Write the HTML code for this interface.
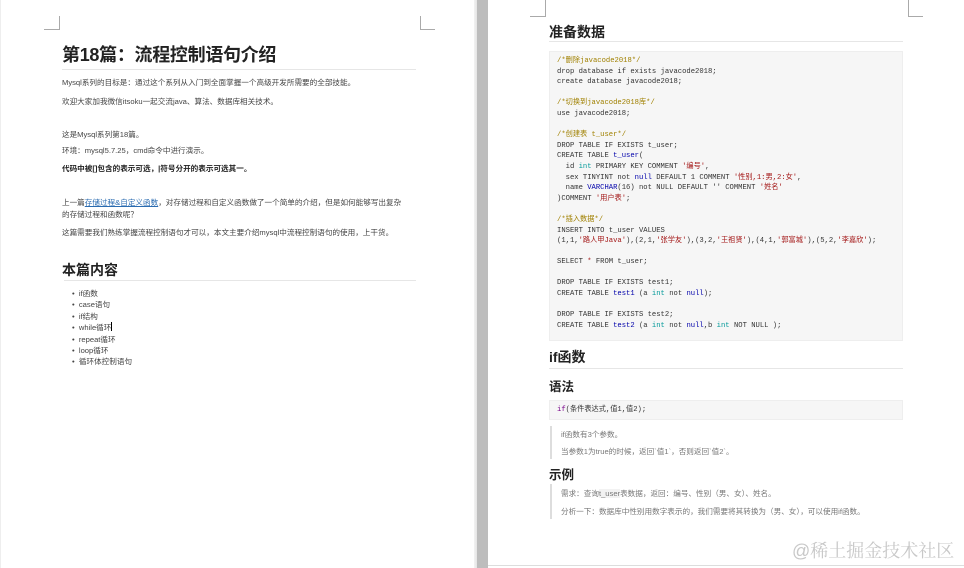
<!DOCTYPE html>
<html><head><meta charset="utf-8"><style>
*{margin:0;padding:0;box-sizing:border-box}
body{width:964px;height:568px;overflow:hidden;background:#fff;position:relative;font-family:"Liberation Sans","Noto Sans CJK SC",sans-serif;color:#333}
.a{position:absolute;white-space:nowrap}
.t{font-size:7.6px;color:#444}
.h1{font-size:18px;font-weight:bold;color:#222;line-height:22px;letter-spacing:-0.3px}
.h2{font-size:14px;font-weight:bold;color:#222}
.h3{font-size:12.5px;font-weight:bold;color:#222}
.rule{position:absolute;height:1px;background:#e6e6e6}
.mk{position:absolute;background:#aaa}
.code{font-family:"Liberation Mono","Noto Sans CJK SC",monospace;font-size:7.2px;color:#333;line-height:10.6px}
.c{color:#a08000}.s{color:#a31515}.k{color:#00a;}
.bq{position:absolute;border-left:2px solid #ddd}
</style></head><body>
<div style="position:absolute;left:474px;top:0;width:4px;height:568px;background:linear-gradient(90deg,#f2f2f2,#e0e0e0)"></div>
<div style="position:absolute;left:477px;top:0;width:11px;height:568px;background:#bdbdbd"></div>
<div style="position:absolute;left:0;top:0;width:1px;height:568px;background:#eee"></div>
<div class="mk" style="left:59px;top:16px;width:1px;height:14px"></div>
<div class="mk" style="left:44px;top:29px;width:16px;height:1px"></div>
<div class="mk" style="left:420px;top:16px;width:1px;height:14px"></div>
<div class="mk" style="left:420px;top:29px;width:15px;height:1px"></div>
<div class="mk" style="left:545px;top:0;width:1px;height:17px"></div>
<div class="mk" style="left:530px;top:16px;width:16px;height:1px"></div>
<div class="mk" style="left:908px;top:0;width:1px;height:17px"></div>
<div class="mk" style="left:908px;top:16px;width:15px;height:1px"></div>

<div class="a h1" style="left:62px;top:44px">第18篇：流程控制语句介绍</div>
<div class="rule" style="left:62px;top:69px;width:354px"></div>
<div class="a t" style="left:62px;top:77px">Mysql系列的目标是：通过这个系列从入门到全面掌握一个高级开发所需要的全部技能。</div>
<div class="a t" style="left:62px;top:96px">欢迎大家加我微信itsoku一起交流java、算法、数据库相关技术。</div>
<div class="a t" style="left:62px;top:129px">这是Mysql系列第18篇。</div>
<div class="a t" style="left:62px;top:145px">环境：mysql5.7.25，cmd命令中进行演示。</div>
<div class="a t" style="left:62px;top:163px;font-weight:bold;color:#222">代码中被[]包含的表示可选，|符号分开的表示可选其一。</div>
<div class="a t" style="left:62px;top:197px">上一篇<span style="color:#2a6bb0;text-decoration:underline">存储过程&amp;自定义函数</span>，对存储过程和自定义函数做了一个简单的介绍，但是如何能够写出复杂</div>
<div class="a t" style="left:62px;top:209px">的存储过程和函数呢？</div>
<div class="a t" style="left:62px;top:227px">这篇需要我们熟练掌握流程控制语句才可以，本文主要介绍mysql中流程控制语句的使用，上干货。</div>
<div class="a h2" style="left:62px;top:260px">本篇内容</div>
<div class="rule" style="left:64px;top:280px;width:352px"></div>
<div class="a t" style="left:72px;top:288px;line-height:11.4px">
• &nbsp;if函数<br>• &nbsp;case语句<br>• &nbsp;if结构<br>• &nbsp;while循环<span style="display:inline-block;width:1px;height:9px;background:#000;vertical-align:-1px"></span><br>• &nbsp;repeat循环<br>• &nbsp;loop循环<br>• &nbsp;循环体控制语句</div>

<div class="a h2" style="left:549px;top:22px">准备数据</div>
<div class="rule" style="left:549px;top:41px;width:354px"></div>
<div style="position:absolute;left:549px;top:51px;width:354px;height:290px;background:#f6f6f6;border:1px solid #eee"></div>
<div class="a code" style="left:557px;top:56px">
<span class="c">/*删除javacode2018*/</span><br>drop database if exists javacode2018;<br>create database javacode2018;<br><br>
<span class="c">/*切换到javacode2018库*/</span><br>use javacode2018;<br><br>
<span class="c">/*创建表 t_user*/</span><br>DROP TABLE IF EXISTS t_user;<br>CREATE TABLE <span class="k">t_user</span>(<br>
&nbsp;&nbsp;id <span style="color:#099">int</span> PRIMARY KEY COMMENT <span class="s">'编号'</span>,<br>
&nbsp;&nbsp;sex TINYINT not <span class="k">null</span> DEFAULT 1 COMMENT <span class="s">'性别,1:男,2:女'</span>,<br>
&nbsp;&nbsp;name <span class="k">VARCHAR</span>(16) not NULL DEFAULT '' COMMENT <span class="s">'姓名'</span><br>
)COMMENT <span class="s">'用户表'</span>;<br><br>
<span class="c">/*插入数据*/</span><br>INSERT INTO t_user VALUES<br>
(1,1,<span class="s">'路人甲Java'</span>),(2,1,<span class="s">'张学友'</span>),(3,2,<span class="s">'王祖贤'</span>),(4,1,<span class="s">'郭富城'</span>),(5,2,<span class="s">'李嘉欣'</span>);<br><br>
SELECT <span class="s">*</span> FROM t_user;<br><br>
DROP TABLE IF EXISTS test1;<br>CREATE TABLE <span class="k">test1</span> (a <span style="color:#099">int</span> not <span class="k">null</span>);<br><br>
DROP TABLE IF EXISTS test2;<br>CREATE TABLE <span class="k">test2</span> (a <span style="color:#099">int</span> not <span class="k">null</span>,b <span style="color:#099">int</span> NOT NULL );</div>
<div class="a h2" style="left:549px;top:347px">if函数</div>
<div class="rule" style="left:549px;top:368px;width:354px"></div>
<div class="a h3" style="left:549px;top:376px">语法</div>
<div style="position:absolute;left:549px;top:400px;width:354px;height:20px;background:#f6f6f6;border:1px solid #eee"></div>
<div class="a code" style="left:557px;top:405px"><span style="color:#708">if</span>(条件表达式,值1,值2);</div>
<div class="bq" style="left:550px;top:426px;height:33px"></div>
<div class="a t" style="left:561px;top:429px;color:#777">if函数有3个参数。</div>
<div class="a t" style="left:561px;top:446px;color:#777">当参数1为true的时候，返回`值1`，否则返回`值2`。</div>
<div class="a h3" style="left:549px;top:464px">示例</div>
<div class="bq" style="left:550px;top:484px;height:35px"></div>
<div class="a t" style="left:561px;top:488px;color:#777">需求：查询<span style="background:#f2f2f2">t_user</span>表数据，返回：编号、性别（男、女）、姓名。</div>
<div class="a t" style="left:561px;top:506px;color:#777">分析一下：数据库中性别用数字表示的，我们需要将其转换为（男、女），可以使用if函数。</div>
<div class="a" style="left:792px;top:537px;font-size:18px;color:#c8c8c8;font-family:'Liberation Sans','Noto Serif CJK SC',serif">@稀土掘金技术社区</div>
<div class="rule" style="left:488px;top:565px;width:476px;background:#ddd"></div>
</body></html>
